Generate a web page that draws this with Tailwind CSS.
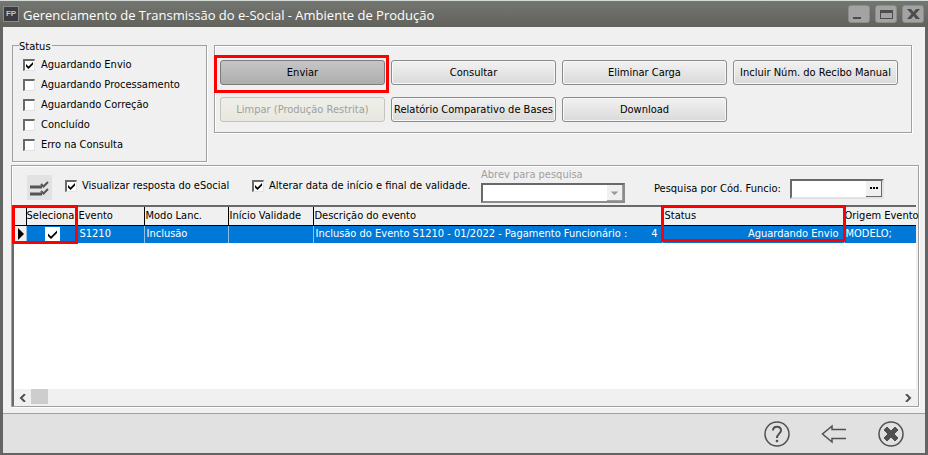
<!DOCTYPE html>
<html lang="pt-BR">

<head>
  <meta charset="UTF-8">
  <meta name="viewport" content="width=device-width, initial-scale=1.0">
  <title>Gerenciamento de Transmissão do e-Social</title>
  <script src="https://cdn.jsdelivr.net/npm/@tailwindcss/browser@4"></script>
</head>

<body class="flex h-screen flex-col bg-[#646464] font-['DejaVu_Sans_Condensed','DejaVu_Sans',sans-serif] text-[11px] leading-4 text-black">

  <!-- title bar -->
  <header class="flex h-[27px] shrink-0 items-center border-t border-[#d5dbd9] bg-linear-to-b from-[#747670] to-[#62625d] pr-1 pl-[3px]">
    <span class="flex size-4 items-center justify-center border border-[#8a8a8a] bg-[#3c3c40] font-['Liberation_Sans',sans-serif] text-[8px] leading-none font-bold text-[#c4c4c4]">FP</span>
    <h1 class="ml-1 flex-1 pt-px font-['Open_Sans',sans-serif] text-[13px] text-white">Gerenciamento de Transmissão do e-Social - Ambiente de Produção</h1>
    <div class="flex gap-[5px]">
      <button type="button" aria-label="Minimizar" class="h-[18px] w-[22px] rounded-[3px] border border-[#8c8c88] bg-[#a3a3a3]">
        <svg class="size-full" viewBox="0 0 20 16" shape-rendering="crispEdges"><path d="M4 11h8v2H4z" fill="#4c4c4c" /></svg>
      </button>
      <button type="button" aria-label="Maximizar" class="h-[18px] w-[22px] rounded-[3px] border border-[#8c8c88] bg-[#a3a3a3]">
        <svg class="size-full" viewBox="0 0 20 16" shape-rendering="crispEdges"><path d="M4 4h13v9H4zM5 7v5h11V7z" fill="#4c4c4c" fill-rule="evenodd" /></svg>
      </button>
      <button type="button" aria-label="Fechar" class="h-[18px] w-[22px] rounded-[3px] border border-[#8c8c88] bg-[#a3a3a3]">
        <svg class="size-full" viewBox="0 0 20 16"><path d="M4 3h4l2.500 3L13 3h4l-4.500 5L17 13h-4l-2.500-3L8 13H4l4.500-5z" fill="#4c4c4c" /></svg>
      </button>
    </div>
  </header>

  <main class="mr-[3px] ml-[3px] flex flex-1 flex-col bg-[#f0f0f0] pr-1.5 pb-1.5 pl-2">

    <div class="flex items-start gap-[7px] pt-2.5 pl-px">
      <!-- status filter -->
      <fieldset class="w-[195px] border border-[#a0a0a0] pt-0.5 pb-1.5 pl-2.5 shadow-[1px_1px_0_#fff]">
        <legend class="-ml-1 h-4 pt-1 pr-px leading-3">Status</legend>
        <label class="flex h-5 items-center gap-1.5">
          <span class="grid">
            <input type="checkbox" checked class="peer col-start-1 row-start-1 size-3 appearance-none border-t-2 border-r border-b border-l-2 border-t-[#696969] border-r-[#e3e3e3] border-b-[#e3e3e3] border-l-[#696969] bg-white">
            <svg class="pointer-events-none invisible col-start-1 row-start-1 size-3 peer-checked:visible" viewBox="0 0 12 12"><path d="M3 5v2.500L5.500 10 10 5.500V3L5.500 7.500z" /></svg>
          </span>
          Aguardando Envio
        </label>
        <label class="flex h-5 items-center gap-1.5">
          <input type="checkbox" class="size-3 appearance-none border-t-2 border-r border-b border-l-2 border-t-[#696969] border-r-[#e3e3e3] border-b-[#e3e3e3] border-l-[#696969] bg-white">
          Aguardando Processamento
        </label>
        <label class="flex h-5 items-center gap-1.5">
          <input type="checkbox" class="size-3 appearance-none border-t-2 border-r border-b border-l-2 border-t-[#696969] border-r-[#e3e3e3] border-b-[#e3e3e3] border-l-[#696969] bg-white">
          Aguardando Correção
        </label>
        <label class="flex h-5 items-center gap-1.5">
          <input type="checkbox" class="size-3 appearance-none border-t-2 border-r border-b border-l-2 border-t-[#696969] border-r-[#e3e3e3] border-b-[#e3e3e3] border-l-[#696969] bg-white">
          Concluído
        </label>
        <label class="flex h-5 items-center gap-1.5">
          <input type="checkbox" class="size-3 appearance-none border-t-2 border-r border-b border-l-2 border-t-[#696969] border-r-[#e3e3e3] border-b-[#e3e3e3] border-l-[#696969] bg-white">
          Erro na Consulta
        </label>
      </fieldset>

      <!-- actions -->
      <section class="mt-2 mr-[7px] flex-1 border border-[#a0a0a0] pt-3.5 pb-2.5 pl-[5px] shadow-[1px_1px_0_#fff,inset_1px_1px_0_#fff]">
        <div class="grid grid-cols-[repeat(4,165px)] gap-x-1.5 gap-y-3">
          <div class="relative grid">
            <button type="button" class="h-[25px] rounded-[3px] border border-[#7c7c7c] bg-linear-to-b from-[#c6c6c6] to-[#adadad]">Enviar</button>
            <span class="pointer-events-none absolute -top-[5px] -right-1 -bottom-2 -left-1.5 border-3 border-[#ff0000]"></span>
          </div>
          <button type="button" class="h-[25px] rounded-[3px] border border-[#8b8b8b] bg-linear-to-b from-[#f2f2f2] to-[#dadada] shadow-[inset_0_0_0_1px_#f8f8f8]">Consultar</button>
          <button type="button" class="h-[25px] rounded-[3px] border border-[#8b8b8b] bg-linear-to-b from-[#f2f2f2] to-[#dadada] shadow-[inset_0_0_0_1px_#f8f8f8]">Eliminar Carga</button>
          <button type="button" class="h-[25px] rounded-[3px] border border-[#8b8b8b] bg-linear-to-b from-[#f2f2f2] to-[#dadada] whitespace-nowrap shadow-[inset_0_0_0_1px_#f8f8f8]">Incluir Núm. do Recibo Manual</button>
          <button type="button" disabled class="h-[25px] rounded-[3px] border border-[#c5c5bf] bg-linear-to-b from-[#efefe9] to-[#e8e8e1] text-[#a0a09a]">Limpar (Produção Restrita)</button>
          <button type="button" class="h-[25px] rounded-[3px] border border-[#8b8b8b] bg-linear-to-b from-[#f2f2f2] to-[#dadada] whitespace-nowrap shadow-[inset_0_0_0_1px_#f8f8f8]">Relatório Comparativo de Bases</button>
          <button type="button" class="h-[25px] rounded-[3px] border border-[#8b8b8b] bg-linear-to-b from-[#f2f2f2] to-[#dadada] shadow-[inset_0_0_0_1px_#f8f8f8]">Download</button>
        </div>
      </section>
    </div>

    <!-- events -->
    <section class="mt-[3px] flex flex-1 flex-col border border-[#a0a0a0] shadow-[1px_1px_0_#fff,inset_1px_1px_0_#fff]">
      <div class="flex h-[39px] items-center pl-[15px]">
        <button type="button" aria-label="Selecionar todos" class="mt-1 size-[25px] bg-[#e2e2e2]">
          <svg class="size-full" viewBox="0 0 25 25" fill="none" stroke="#555" stroke-width="2">
            <path d="M3 12h12M3 19h12" stroke-width="3" />
            <path d="M14 9l2.500 2.500L21 7M14 16l2.500 2.500L21 14" />
          </svg>
        </button>
        <label class="ml-[13px] flex items-center gap-[5px]">
          <span class="grid">
            <input type="checkbox" checked class="peer col-start-1 row-start-1 size-3 appearance-none border-t-2 border-r border-b border-l-2 border-t-[#696969] border-r-[#e3e3e3] border-b-[#e3e3e3] border-l-[#696969] bg-white">
            <svg class="pointer-events-none invisible col-start-1 row-start-1 size-3 peer-checked:visible" viewBox="0 0 12 12"><path d="M3 5v2.500L5.500 10 10 5.500V3L5.500 7.500z" /></svg>
          </span>
          <span class="w-[146px] whitespace-nowrap">Visualizar resposta do eSocial</span>
        </label>
        <label class="ml-6 flex items-center gap-[5px]">
          <span class="grid">
            <input type="checkbox" checked class="peer col-start-1 row-start-1 size-3 appearance-none border-t-2 border-r border-b border-l-2 border-t-[#696969] border-r-[#e3e3e3] border-b-[#e3e3e3] border-l-[#696969] bg-white">
            <svg class="pointer-events-none invisible col-start-1 row-start-1 size-3 peer-checked:visible" viewBox="0 0 12 12"><path d="M3 5v2.500L5.500 10 10 5.500V3L5.500 7.500z" /></svg>
          </span>
          <span class="w-[212px] whitespace-nowrap">Alterar data de início e final de validade.</span>
        </label>
        <div class="flex flex-col">
          <label for="abrev" class="h-[15px] leading-[14px] text-[#a0a0a0]">Abrev para pesquisa</label>
          <span class="grid">
            <select id="abrev" disabled class="col-start-1 row-start-1 h-5 w-36 appearance-none border-2 border-t-[#696969] border-r-[#8c8c8c] border-b-[#8c8c8c] border-l-[#696969] bg-white">
              <option></option>
            </select>
            <svg class="pointer-events-none col-start-1 row-start-1 mr-0.5 size-4 self-center justify-self-end border-r border-b border-[#a0a0a0] bg-[#f0f0f0]" viewBox="0 0 16 16"><path d="M4 7h8l-4 4z" fill="#9a9a9a" /></svg>
          </span>
        </div>
        <label for="funcio" class="mt-1.5 mr-2.5 ml-auto w-[126px] text-right whitespace-nowrap">Pesquisa por Cód. Funcio:</label>
        <div class="mt-1.5 mr-[34px] flex h-5 w-[94px] border-2 border-t-[#696969] border-r-[#e3e3e3] border-b-[#e3e3e3] border-l-[#696969] bg-white">
          <input id="funcio" type="text" class="min-w-0 flex-1 px-1 outline-none">
          <button type="button" aria-label="Pesquisar" class="flex w-4 items-center justify-center gap-px border-r border-b border-[#696969] bg-[#f0f0f0]">
            <i class="size-0.5 bg-black"></i><i class="size-0.5 bg-black"></i><i class="size-0.5 bg-black"></i>
          </button>
        </div>
      </div>

      <div class="mr-0.5 flex flex-1 flex-col border-t-2 border-l-2 border-t-[#696969] border-l-[#696969] bg-white">
        <table class="w-full table-fixed border-collapse">
          <colgroup>
            <col class="w-3">
            <col class="w-[51px]">
            <col class="w-[67px]">
            <col class="w-[84px]">
            <col class="w-[85px]">
            <col>
            <col class="w-[182px]">
            <col class="w-[72px]">
          </colgroup>
          <thead>
            <tr class="h-[18px] border-b border-black bg-[#f0f0f0] text-left whitespace-nowrap [&>th]:border-r [&>th]:border-black [&>th]:p-0 [&>th]:pl-px [&>th]:font-normal">
              <th class="relative"><span class="pointer-events-none absolute -top-0.5 -left-0.5 z-10 h-[39px] w-[66px] border-3 border-[#ff0000]"></span></th>
              <th class="pl-0!">Seleciona</th>
              <th>Evento</th>
              <th>Modo Lanc.</th>
              <th>Início Validade</th>
              <th>Descrição do evento</th>
              <th class="relative pl-0.5!"><span class="pointer-events-none absolute -inset-x-0.5 -top-0.5 z-10 h-[37px] border-3 border-[#ff0000]"></span>Status</th>
              <th class="border-r-0! pl-0!">Origem Evento</th>
            </tr>
          </thead>
          <tbody>
            <tr class="h-[18px] bg-[#0078d7] whitespace-nowrap text-white [&>td]:border-r [&>td]:border-[#8cc0ea] [&>td]:p-0 [&>td]:pl-0.5">
              <td class="bg-[#f0f0f0] pl-0!">
                <svg class="ml-1 h-3 w-1.5" viewBox="0 0 6 12"><path d="M0 0l6 6-6 6z" fill="#000" /></svg>
              </td>
              <td>
                <span class="mx-auto grid w-[15px]">
                  <input type="checkbox" checked aria-label="Seleciona" class="peer col-start-1 row-start-1 size-[15px] appearance-none bg-white">
                  <svg class="pointer-events-none invisible col-start-1 row-start-1 size-[15px] peer-checked:visible" viewBox="0 0 15 15"><path d="M3 6.500v2.500L6 12l6-6V3.500L6 9.500z" fill="#000" /></svg>
                </span>
              </td>
              <td>S1210</td>
              <td>Inclusão</td>
              <td></td>
              <td>
                <span class="flex justify-between pr-1"><span>Inclusão do Evento S1210 - 01/2022 - Pagamento Funcionário :</span><span>4</span></span>
              </td>
              <td class="pr-[5px]! text-right">Aguardando Envio</td>
              <td class="border-r-0! pl-px!">MODELO;</td>
            </tr>
          </tbody>
        </table>

        <div class="mt-auto flex h-[17px] items-center bg-[#f0f0f0]">
          <button type="button" aria-label="Rolar para a esquerda" class="grid h-full w-[17px] place-items-center">
            <svg class="size-2" viewBox="0 0 8 8" fill="none" stroke="#505050" stroke-width="2"><path d="M6 0L2 4l4 4" /></svg>
          </button>
          <span class="h-[15px] w-[17px] self-start bg-[#cdcdcd]"></span>
          <button type="button" aria-label="Rolar para a direita" class="ml-auto grid h-full w-[17px] place-items-center">
            <svg class="size-2" viewBox="0 0 8 8" fill="none" stroke="#505050" stroke-width="2"><path d="M2 0l4 4-4 4" /></svg>
          </button>
        </div>
      </div>
    </section>
  </main>

  <footer class="mx-[3px] mb-0.5 flex h-10 shrink-0 items-center justify-end gap-[31px] border-t border-[#a0a0a0] bg-[#e1e1e1] pr-[21px]">
    <button type="button" aria-label="Ajuda">
      <svg class="size-[26px]" viewBox="0 0 26 26" fill="none" stroke="#505050">
        <circle cx="13" cy="13" r="12" stroke-width="1.500" />
        <path d="M9 9.500C9 4.500 17 4.500 17 9.500c0 3-4 3.500-4 7.500" stroke-width="2" />
        <circle cx="13" cy="20" r="1.300" fill="#505050" stroke="none" />
      </svg>
    </button>
    <button type="button" aria-label="Voltar">
      <svg class="size-[26px]" viewBox="0 0 26 26" fill="none" stroke="#505050" stroke-width="1.500">
        <path d="M25 8.500H11V5L1.500 13l9.500 8v-3.500h14" />
      </svg>
    </button>
    <button type="button" aria-label="Sair">
      <svg class="size-[26px]" viewBox="0 0 26 26">
        <circle cx="13" cy="13" r="12" fill="none" stroke="#505050" stroke-width="1.500" />
        <path d="M9 6l4 4 4-4 3 3-4 4 4 4-3 3-4-4-4 4-3-3 4-4-4-4z" fill="#505050" stroke="#505050" stroke-linejoin="round" />
      </svg>
    </button>
  </footer>
</body>

</html>
